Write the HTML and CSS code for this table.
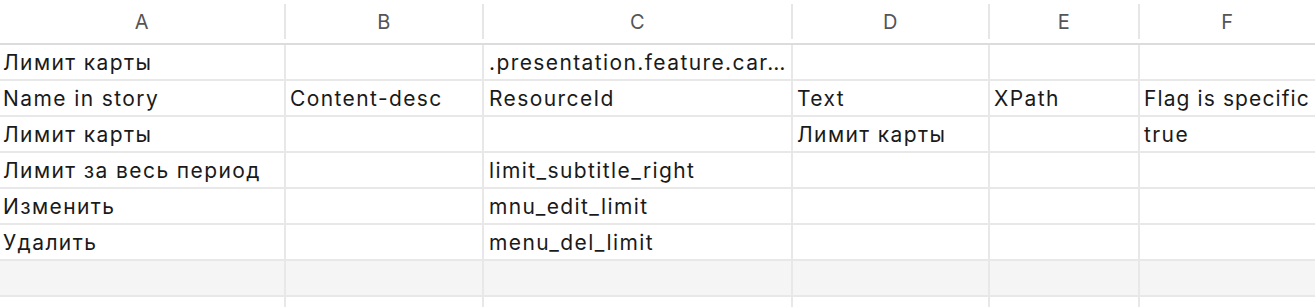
FILE: index.html
```html
<!DOCTYPE html>
<html lang="ru">
<head>
<meta charset="utf-8">
<title>Sheet</title>
<link rel="stylesheet" href="styles.css">
</head>
<body>
<div class="sheet">
  <div class="head">
    <div class="hcell">A</div>
    <div class="hcell">B</div>
    <div class="hcell">C</div>
    <div class="hcell">D</div>
    <div class="hcell">E</div>
    <div class="hcell last">F</div>
  </div>
  <div class="grid">
    <div class="cell">Лимит карты</div><div class="cell"></div><div class="cell">.presentation.feature.car…</div><div class="cell"></div><div class="cell"></div><div class="cell"></div>
    <div class="cell">Name in story</div><div class="cell">Content-desc</div><div class="cell">ResourceId</div><div class="cell">Text</div><div class="cell">XPath</div><div class="cell tight">Flag is specific</div>
    <div class="cell">Лимит карты</div><div class="cell"></div><div class="cell"></div><div class="cell">Лимит карты</div><div class="cell"></div><div class="cell">true</div>
    <div class="cell">Лимит за весь период</div><div class="cell"></div><div class="cell">limit_subtitle_right</div><div class="cell"></div><div class="cell"></div><div class="cell"></div>
    <div class="cell">Изменить</div><div class="cell"></div><div class="cell">mnu_edit_limit</div><div class="cell"></div><div class="cell"></div><div class="cell"></div>
    <div class="cell">Удалить</div><div class="cell"></div><div class="cell">menu_del_limit</div><div class="cell"></div><div class="cell"></div><div class="cell"></div>
    <div class="cell alt"></div><div class="cell alt"></div><div class="cell alt"></div><div class="cell alt"></div><div class="cell alt"></div><div class="cell alt"></div>
    <div class="cell"></div><div class="cell"></div><div class="cell"></div><div class="cell"></div><div class="cell"></div><div class="cell"></div>
  </div>
</div>
</body>
</html>
```

FILE: styles.css
```css
html, body {
  margin: 0;
  padding: 0;
  background: #ffffff;
}
body {
  width: 1315px;
  height: 307px;
  overflow: hidden;
  font-family: Inter, "Liberation Sans", sans-serif;
  color: #1a1a1a;
}
.sheet {
  width: 1315px;
}
.head {
  display: grid;
  grid-template-columns: 286px 198px 309px 197px 150px 1fr;
  height: 43px;
  border-bottom: 2px solid #dcdcdc;
  box-sizing: content-box;
  align-items: start;
}
.hcell {
  box-sizing: border-box;
  height: 35px;
  margin-top: 4px;
  border-right: 2px solid #e6e6e6;
  display: flex;
  align-items: center;
  justify-content: center;
  font-size: 20px;
  color: #555555;
  letter-spacing: 0.5px;
}
.hcell.last {
  border-right: none;
}
.grid {
  display: grid;
  grid-template-columns: 286px 198px 309px 197px 150px 1fr;
  grid-auto-rows: 36px;
}
.cell {
  box-sizing: border-box;
  border-right: 2px solid #e8e8e8;
  border-bottom: 2px solid #e8e8e8;
  display: flex;
  align-items: center;
  padding-left: 4px;
  padding-top: 1px;
  font-size: 21px;
  letter-spacing: 1.4px;
  white-space: nowrap;
  overflow: hidden;
}
.cell:nth-child(6n+1) {
  padding-left: 3px;
}
.cell:nth-child(6n+3) {
  padding-left: 5px;
}
.cell:nth-child(6n) {
  border-right: none;
}
.cell.tight {
  letter-spacing: 1.1px;
}
.cell.alt {
  background: #f5f5f5;
}
```
